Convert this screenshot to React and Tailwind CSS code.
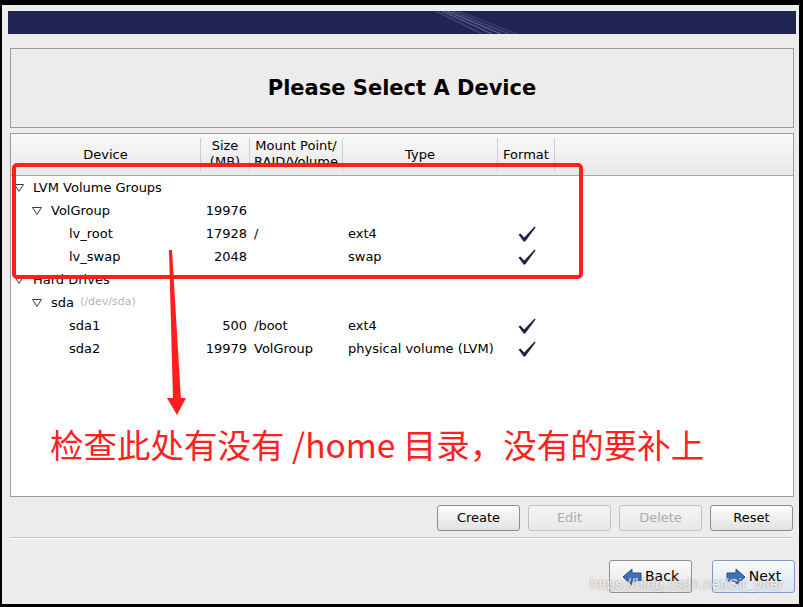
import React from 'react';

const rows = [
    { level: 0, name: 'LVM Volume Groups', expander: true },
    { level: 1, name: 'VolGroup', expander: true, size: '19976' },
    { level: 2, name: 'lv_root', size: '17928', mount: '/', type: 'ext4', format: true },
    { level: 2, name: 'lv_swap', size: '2048', type: 'swap', format: true },
    { level: 0, name: 'Hard Drives', expander: true },
    { level: 1, name: 'sda', hint: '(/dev/sda)', expander: true },
    { level: 2, name: 'sda1', size: '500', mount: '/boot', type: 'ext4', format: true },
    { level: 2, name: 'sda2', size: '19979', mount: 'VolGroup', type: 'physical volume (LVM)', format: true },
];

const cols = 'grid grid-cols-[190px_49px_93px_155px_57px_1fr]';

const Expander = () => (
    <svg width="10" height="8" viewBox="0 0 10 8" className="ml-[3px] shrink-0">
        <polygon points="0.5,0.5 9.5,0.5 5,7.5" fill="#fff" stroke="#3a3a3a" strokeWidth="1" />
    </svg>
);

// calligraphic check mark
const Check = () => (
    <svg width="18" height="16" viewBox="0 0 18 16">
        <path d="M0.5 8.6 L2.4 7.6 L6.2 11.6 L16.6 0.6 L17.6 1.4 L7.2 15.4 L5.6 15.4 Z" fill="#1c2541" />
    </svg>
);

const Btn = ({ children, disabled }) => (
    <button
        className={
            disabled
                ? 'w-[83px] h-[26px] rounded-[3px] border border-[#c2c2c2] bg-gradient-to-b from-[#f4f4f4] to-[#e9e9e9] text-[#ababab]'
                : 'w-[83px] h-[26px] rounded-[3px] border border-[#8e8e8e] bg-gradient-to-b from-[#fcfcfc] to-[#e2e2e2] text-black'
        }
    >
        {children}
    </button>
);

const BlockArrow = ({ flip }) => (
    <svg width="20" height="18" viewBox="0 0 20 18" className={flip ? '-scale-x-100' : ''}>
        <polygon points="1,9 10,1 10,5 19,5 19,13 10,13 10,17" fill="#3f70b8" stroke="#264c86" strokeWidth="1" strokeLinejoin="round" />
    </svg>
);

export default function App() {
    return (
        <div className="relative w-[803px] h-[607px] bg-black pt-[5px] pl-[2px] pr-[4px] pb-[3px] font-['DejaVu_Sans',sans-serif] text-[13px] text-black">
            <div className="h-full bg-[#edeceb] flex flex-col">
                {/* banner */}
                <div className="mt-[6px] ml-[6px] mr-[3px] h-[23px] bg-[#1f2452] overflow-hidden">
                    <svg width="788" height="23" viewBox="0 0 788 23">
                        <line x1="428" y1="0" x2="474" y2="23" stroke="#5a5f8e" strokeWidth="2" opacity="0.45" />
                        <line x1="434" y1="0" x2="484" y2="23" stroke="#7a7fae" strokeWidth="1.5" opacity="0.55" />
                        <line x1="439" y1="0" x2="493" y2="23" stroke="#8c90bc" strokeWidth="1.5" opacity="0.5" />
                        <line x1="444" y1="0" x2="501" y2="23" stroke="#6d72a2" strokeWidth="1.5" opacity="0.45" />
                        <line x1="450" y1="0" x2="509" y2="23" stroke="#4c5183" strokeWidth="2" opacity="0.45" />
                    </svg>
                </div>

                {/* title */}
                <div className="mt-[14px] ml-[8px] mr-[5px] h-[80px] border border-[#9c9c9c] flex items-center justify-center">
                    <h1 className="text-[21px] font-bold leading-none">Please Select A Device</h1>
                </div>

                {/* device table */}
                <div className="mt-[5px] ml-[8px] mr-[5px] h-[364px] border border-[#9c9c9c] bg-white">
                    <div className={`${cols} h-[42px] py-[4px] border-b border-[#a8a8a8] bg-gradient-to-b from-[#f9f9f9] to-[#e8e8e8]`}>
                        <div className="border-r border-[#cdcdcd] flex items-center justify-center">Device</div>
                        <div className="border-r border-[#cdcdcd] flex flex-col items-center leading-[16px] overflow-hidden">
                            <span>Size</span>
                            <span>(MB)</span>
                        </div>
                        <div className="border-r border-[#cdcdcd] flex flex-col items-center leading-[16px] overflow-hidden whitespace-nowrap">
                            <span>Mount Point/</span>
                            <span>RAID/Volume</span>
                        </div>
                        <div className="border-r border-[#cdcdcd] flex items-center justify-center">Type</div>
                        <div className="border-r border-[#cdcdcd] flex items-center justify-center">Format</div>
                        <div />
                    </div>

                    {rows.map((r) => (
                        <div key={r.name} className={`${cols} h-[23px] items-center`}>
                            <div className="flex items-center whitespace-nowrap" style={{ paddingLeft: r.level * 18 }}>
                                <span className="w-[22px] flex items-center shrink-0">{r.expander && <Expander />}</span>
                                <span>{r.name}</span>
                                {r.hint && <span className="ml-[6px] text-[11px] text-[#b5b5b5]">{r.hint}</span>}
                            </div>
                            <div className="text-right pr-[3px]">{r.size}</div>
                            <div className="pl-[4px]">{r.mount}</div>
                            <div className="pl-[5px] whitespace-nowrap">{r.type}</div>
                            <div className="flex justify-center">{r.format && <Check />}</div>
                            <div />
                        </div>
                    ))}
                </div>

                {/* action buttons */}
                <div className="mt-[8px] mr-[6px] flex justify-end gap-[8px]">
                    <Btn>Create</Btn>
                    <Btn disabled>Edit</Btn>
                    <Btn disabled>Delete</Btn>
                    <Btn>Reset</Btn>
                </div>

                <div className="mt-[6px] ml-[8px] mr-[6px] h-[2px] border-t border-[#c6c5c4] border-b border-b-white" />

                {/* navigation */}
                <div className="mt-[21px] mr-[4px] flex justify-end gap-[20px]">
                    <button className="w-[83px] h-[33px] rounded-[3px] border border-[#8e8e8e] bg-gradient-to-b from-[#fcfcfc] to-[#e2e2e2] flex items-center justify-center gap-[3px] text-[14px]">
                        <BlockArrow />
                        <span>Back</span>
                    </button>
                    <button className="w-[83px] h-[33px] rounded-[3px] border border-[#7d9dc6] bg-gradient-to-b from-[#f7f9fc] to-[#dde5ef] flex items-center justify-center gap-[3px] text-[14px]">
                        <BlockArrow flip />
                        <span>Next</span>
                    </button>
                </div>
            </div>

            {/* red annotation overlay */}
            <div className="absolute left-[12px] top-[163px] w-[571px] h-[116px] border-[4px] border-[#ff1e1e] rounded-[5px]" />
            <svg className="absolute left-[160px] top-[245px]" width="30" height="175" viewBox="0 0 30 175">
                <polygon points="9,5 12,5 21,155 13,155" fill="#ff1e1e" />
                <polygon points="7,153 26,153 17,170" fill="#ff1e1e" />
            </svg>
            <div className="absolute left-[50px] top-[425px] text-[33.5px] leading-[38px] text-[#ff2121] whitespace-nowrap font-['Noto_Sans_CJK_SC',sans-serif]">
                检查此处有没有 /home 目录，没有的要补上
            </div>

            {/* watermark */}
            <div className="absolute left-[590px] top-[576px] text-[15px] leading-none text-white/80 whitespace-nowrap font-['Liberation_Sans',sans-serif] [text-shadow:0_0_2px_rgba(90,90,90,0.7)]">
                https://blog.csdn.net/Sir_viter
            </div>
        </div>
    );
}
